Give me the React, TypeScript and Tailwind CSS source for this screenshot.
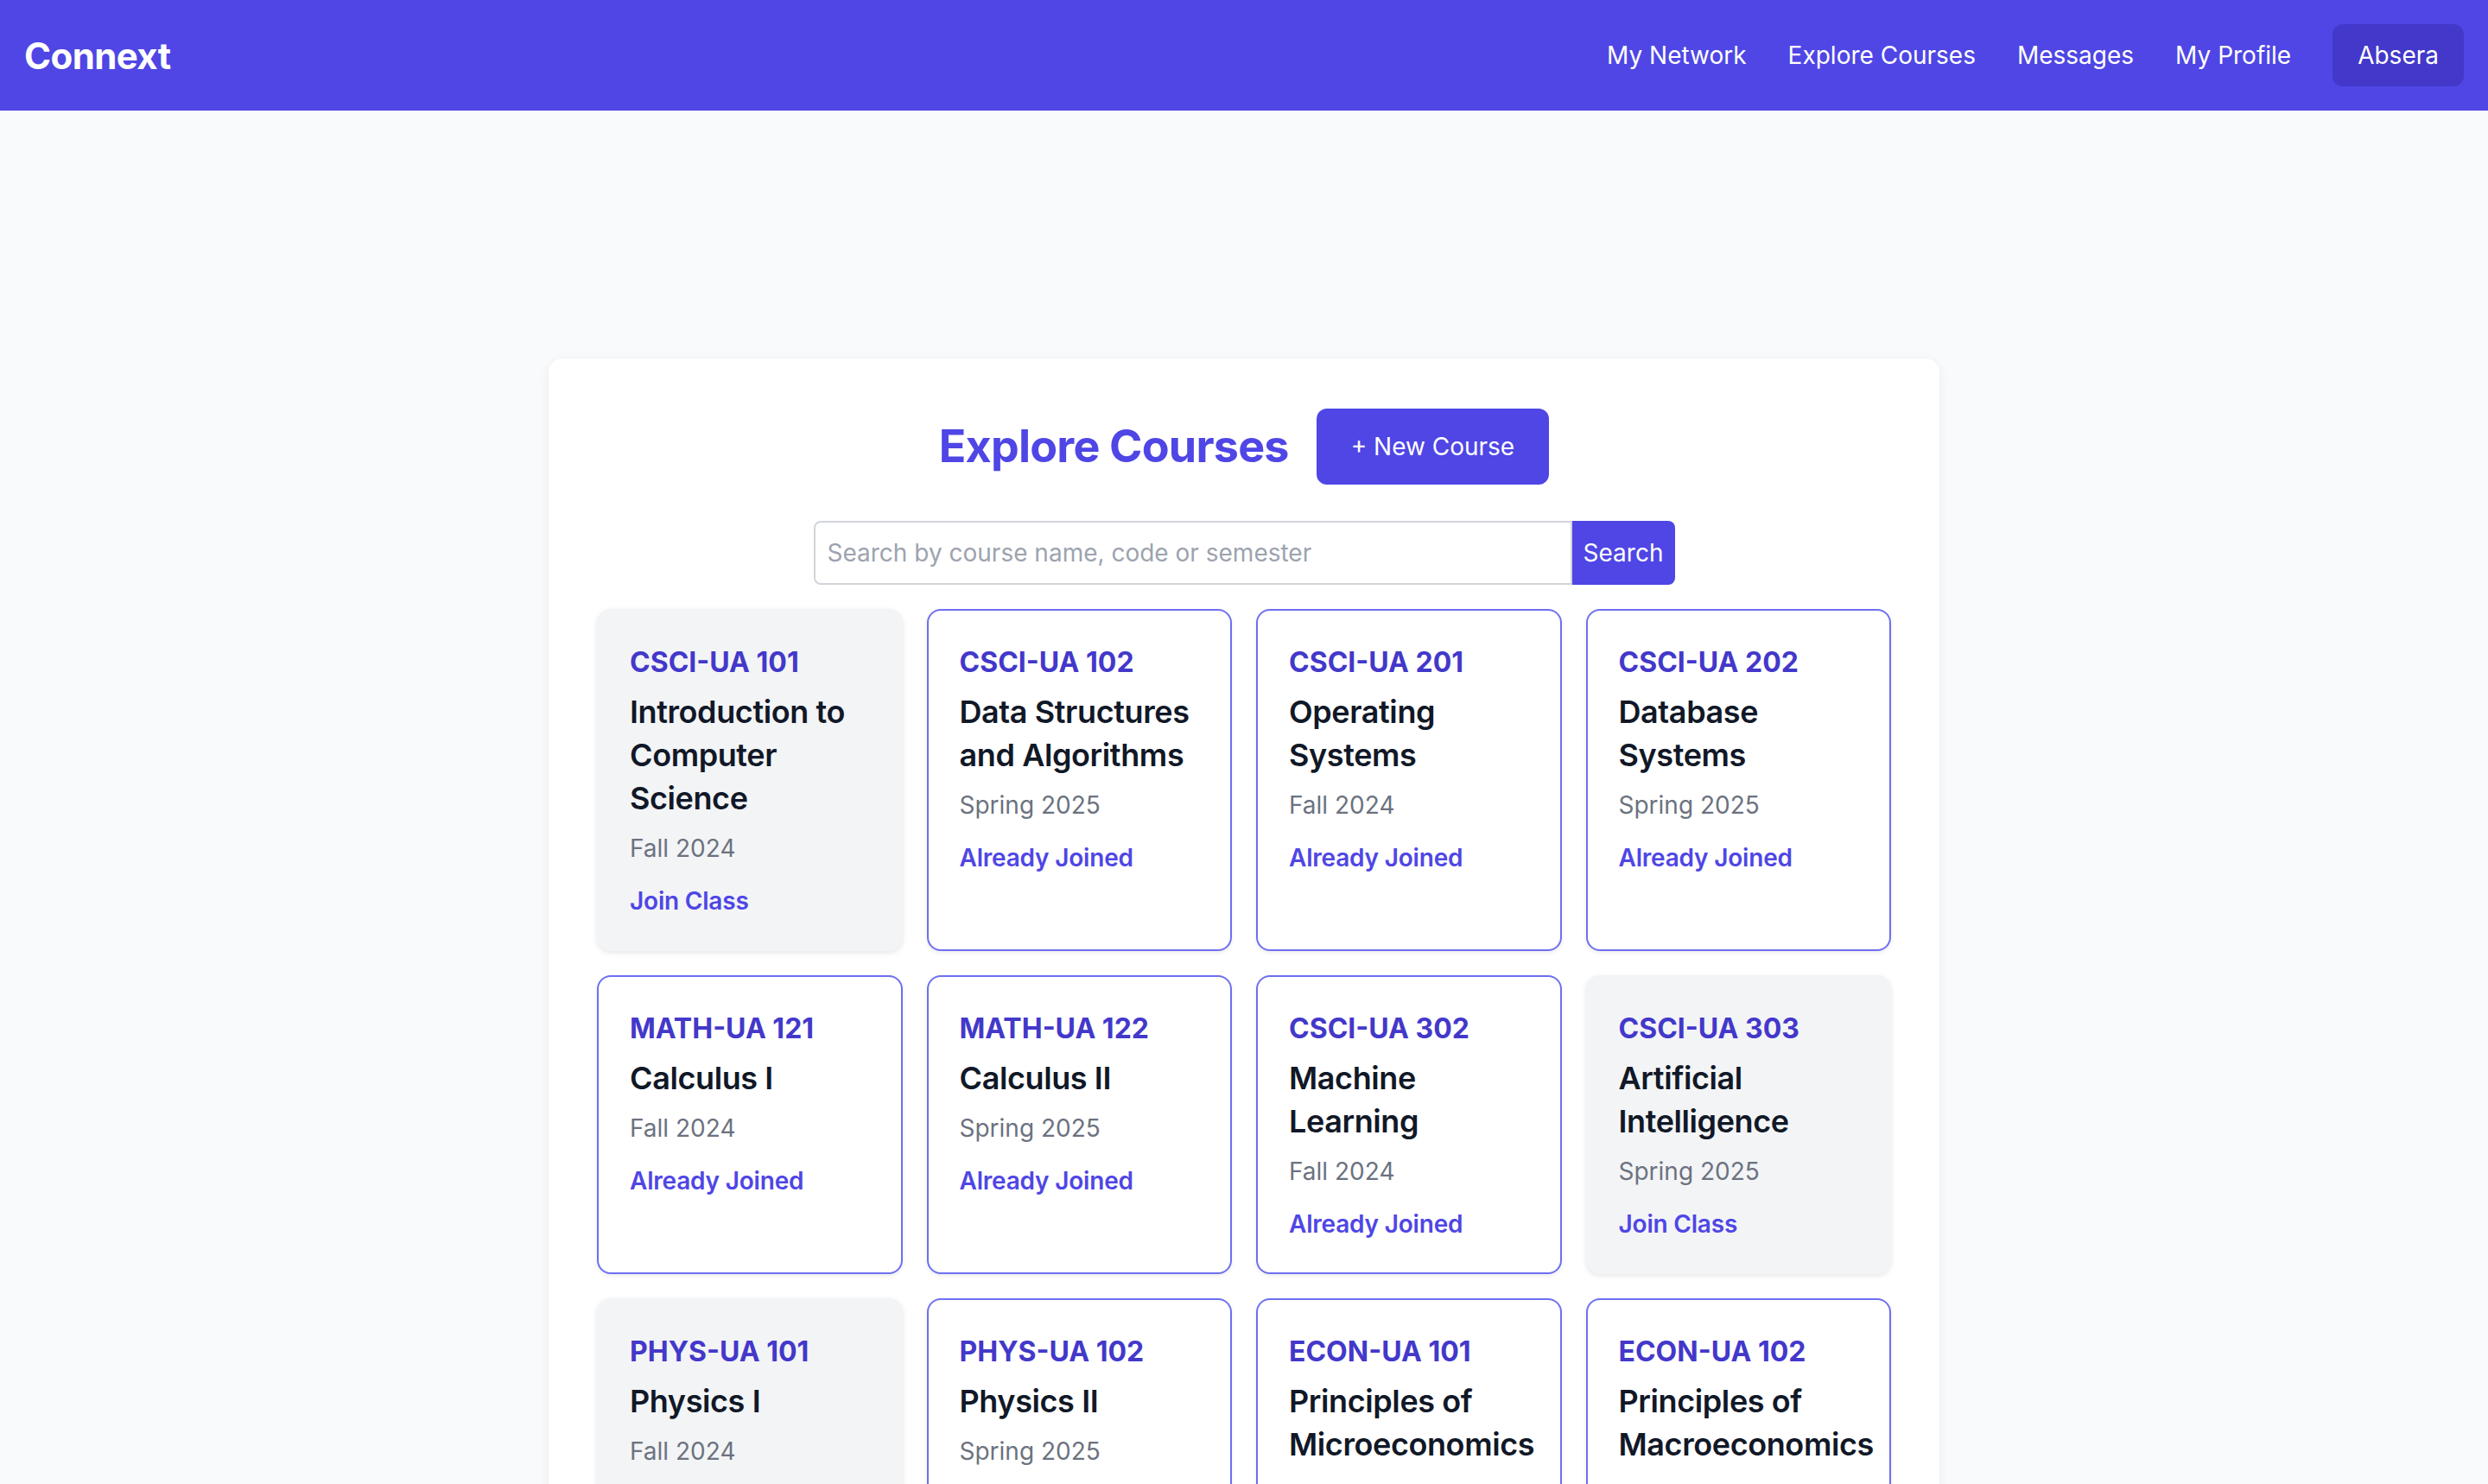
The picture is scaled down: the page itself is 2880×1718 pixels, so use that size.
import React from 'react'

type Course = {
  code: string
  name: string
  semester: string
  joined: boolean
}

const courses: Course[] = [
  { code: 'CSCI-UA 101', name: 'Introduction to Computer Science', semester: 'Fall 2024', joined: false },
  { code: 'CSCI-UA 102', name: 'Data Structures and Algorithms', semester: 'Spring 2025', joined: true },
  { code: 'CSCI-UA 201', name: 'Operating Systems', semester: 'Fall 2024', joined: true },
  { code: 'CSCI-UA 202', name: 'Database Systems', semester: 'Spring 2025', joined: true },
  { code: 'MATH-UA 121', name: 'Calculus I', semester: 'Fall 2024', joined: true },
  { code: 'MATH-UA 122', name: 'Calculus II', semester: 'Spring 2025', joined: true },
  { code: 'CSCI-UA 302', name: 'Machine Learning', semester: 'Fall 2024', joined: true },
  { code: 'CSCI-UA 303', name: 'Artificial Intelligence', semester: 'Spring 2025', joined: false },
  { code: 'PHYS-UA 101', name: 'Physics I', semester: 'Fall 2024', joined: false },
  { code: 'PHYS-UA 102', name: 'Physics II', semester: 'Spring 2025', joined: true },
  { code: 'ECON-UA 101', name: 'Principles of Microeconomics', semester: 'Fall 2024', joined: true },
  { code: 'ECON-UA 102', name: 'Principles of Macroeconomics', semester: 'Spring 2025', joined: true },
]

const navLinks = ['My Network', 'Explore Courses', 'Messages', 'My Profile']

function CourseCard({ course }: { course: Course }) {
  return (
    <div
      className={
        course.joined
          ? 'rounded-2xl border-2 border-[#6d70f0] bg-white p-[36px] shadow-[0_2px_5px_rgba(0,0,0,0.08)]'
          : 'rounded-2xl border-2 border-transparent bg-[#f3f4f6] p-[36px] shadow-[0_2px_6px_rgba(0,0,0,0.1)]'
      }
    >
      <h3 className="text-[32px] font-bold leading-[48px] text-[#4338ca]">{course.code}</h3>
      <p className="mt-[8px] text-[36px] font-semibold leading-[50px] tracking-[-0.4px] text-[#111827]">
        {course.name}
      </p>
      <p className="mt-[13px] text-[28px] leading-[40px] text-[#6b7280]">{course.semester}</p>
      <button className="mt-[21px] block text-[28px] font-semibold leading-[40px] tracking-[-0.2px] text-[#4f46e5]">
        {course.joined ? 'Already Joined' : 'Join Class'}
      </button>
    </div>
  )
}

export default function App() {
  return (
    <div className="min-h-screen bg-[#f9fafb] font-['Inter',sans-serif]">
      {/* header */}
      <header className="flex h-[128px] items-center justify-between bg-[#4f46e5] px-[28px]">
        <span className="text-[42px] font-bold tracking-[-0.6px] text-white">Connext</span>
        <nav className="flex items-center gap-12">
          {navLinks.map((l) => (
            <a key={l} className="text-[28px] font-normal leading-[40px] text-white">
              {l}
            </a>
          ))}
          <button className="rounded-xl bg-[#4338ca] px-[29px] py-[16px] text-[28px] font-normal leading-[40px] text-white">
            Absera
          </button>
        </nav>
      </header>

      {/* main */}
      <main className="flex justify-center pb-[120px] pt-[287px]">
        <div className="w-[1610px] rounded-2xl bg-white px-[56px] pb-[56px] pt-[58px] shadow-[0_2px_14px_rgba(0,0,0,0.06)]">
          <div className="flex items-center justify-center gap-8">
            <h1 className="text-[52px] font-bold tracking-[-0.8px] text-[#4f46e5]">Explore Courses</h1>
            <button className="rounded-xl bg-[#4f46e5] px-[40px] py-[24px] text-[28px] font-normal leading-[40px] text-white">
              + New Course
            </button>
          </div>

          <div className="mt-[42px] flex justify-center">
            <input
              placeholder="Search by course name, code or semester"
              className="h-[74px] w-[878px] rounded-l-lg border-2 border-[#d1d5db] px-[14px] text-[28px] text-gray-900 outline-none placeholder:text-[#9ca3af]"
            />
            <button className="h-[74px] w-[119px] rounded-r-lg bg-[#4f46e5] text-[28px] font-normal text-white">
              Search
            </button>
          </div>

          <div className="mt-[28px] grid grid-cols-4 gap-[28px]">
            {courses.map((c) => (
              <CourseCard key={c.code} course={c} />
            ))}
          </div>
        </div>
      </main>
    </div>
  )
}
